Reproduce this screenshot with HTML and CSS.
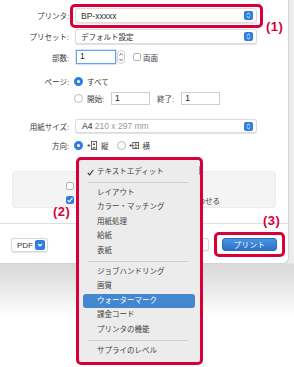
FILE: index.html
```html
<!DOCTYPE html>
<html lang="ja">
<head>
    <meta charset="UTF-8">
    <meta name="viewport" content="width=device-width, initial-scale=1.0">
    <title>プリント</title>
    <link rel="stylesheet" href="styles.css">
</head>
<body>

    <div class="dialog">
        <div class="form">
            <div class="row r1">
                <span class="label">プリンタ:</span>
                <div class="select"><span class="val latin">BP-xxxxx</span>
                    <svg class="stepper" width="9" height="9" viewBox="0 0 9 9"><rect width="9" height="9" rx="2" fill="#2f7de0"/><path d="M2.8 3.7 4.5 2.1 6.2 3.7M2.8 5.3 4.5 6.9 6.2 5.3" fill="none" stroke="#fff" stroke-width="1"/></svg>
                </div>
            </div>
            <div class="row r2">
                <span class="label">プリセット:</span>
                <div class="select"><span class="val">デフォルト設定</span>
                    <svg class="stepper" width="9" height="9" viewBox="0 0 9 9"><rect width="9" height="9" rx="2" fill="#2f7de0"/><path d="M2.8 3.7 4.5 2.1 6.2 3.7M2.8 5.3 4.5 6.9 6.2 5.3" fill="none" stroke="#fff" stroke-width="1"/></svg>
                </div>
            </div>
            <div class="row r3">
                <span class="label">部数:</span>
                <div class="field copies focus">1</div>
                <svg class="spin" width="8" height="14" viewBox="0 0 8 14"><rect x="0.5" y="0.5" width="7" height="13" rx="3.5" fill="#fff" stroke="#cfcfcf"/><path d="M2.3 5.2 4 3.5 5.7 5.2M2.3 8.8 4 10.5 5.7 8.8" fill="none" stroke="#555" stroke-width=".9"/></svg>
                <span class="check"></span>
                <span class="text">両面</span>
            </div>
            <div class="row r4">
                <span class="label">ページ:</span>
                <span class="radio on"></span>
                <span class="text">すべて</span>
            </div>
            <div class="row r5">
                <span class="label"></span>
                <span class="radio"></span>
                <span class="text">開始:</span>
                <div class="field range">1</div>
                <span class="text end">終了:</span>
                <div class="field range">1</div>
            </div>
            <div class="row r6">
                <span class="label">用紙サイズ:</span>
                <div class="select"><span class="val latin"><b>A4</b> <span class="dim">210 x 297 mm</span></span>
                    <svg class="stepper" width="9" height="9" viewBox="0 0 9 9"><rect width="9" height="9" rx="2" fill="#2f7de0"/><path d="M2.8 3.7 4.5 2.1 6.2 3.7M2.8 5.3 4.5 6.9 6.2 5.3" fill="none" stroke="#fff" stroke-width="1"/></svg>
                </div>
            </div>
            <div class="row r7">
                <span class="label">方向:</span>
                <span class="radio on"></span>
                <svg class="orient" width="10" height="9" viewBox="0 0 10 9"><path d="M0.3 4.5h3M1.8 3v3" stroke="#444" stroke-width=".8"/><rect x="4.4" y="0.4" width="5.2" height="8.2" fill="none" stroke="#444" stroke-width=".8"/><circle cx="7" cy="3.2" r="1" fill="#444"/><path d="M5.3 7.4c0-1.6 3.4-1.6 3.4 0z" fill="#444"/></svg>
                <span class="text">縦</span>
                <span class="radio second"></span>
                <svg class="orient" width="10" height="9" viewBox="0 0 10 9"><path d="M0.3 4.5h3M1.8 3v3" stroke="#444" stroke-width=".8"/><rect x="3.9" y="1.4" width="5.7" height="6.2" fill="none" stroke="#444" stroke-width=".8"/><path d="M4.4 4.5h4.8" stroke="#444" stroke-width=".6"/><circle cx="6.8" cy="3.1" r=".8" fill="#444"/><path d="M5.6 6.8c0-1.3 2.4-1.3 2.4 0z" fill="#444"/></svg>
                <span class="text">横</span>
            </div>
        </div>

        <div class="panel">
            <div class="opt"><span class="check"></span></div>
            <div class="opt"><span class="check on"></span><span class="text">内容を折り返してページの横幅に合わせる</span></div>
        </div>

        <div class="footer">
            <div class="btn pdf"><span class="latin">PDF</span>
                <svg width="10" height="10" viewBox="0 0 10 10"><rect width="10" height="10" rx="2" fill="#2f7de0"/><path d="M3 4 5 6 7 4" fill="none" stroke="#fff" stroke-width="1.1"/></svg>
            </div>
            <div class="btn cancel">キャンセル</div>
            <div class="btn print">プリント</div>
        </div>
    </div>

    <div class="menu">
        <div class="item"><svg class="tick" width="7" height="7" viewBox="0 0 7 7"><path d="M0.8 3.8 2.6 5.8 6.2 1" fill="none" stroke="#333" stroke-width="1.1"/></svg>テキストエディット</div>
        <div class="sep"></div>
        <div class="item">レイアウト</div>
        <div class="item">カラー・マッチング</div>
        <div class="item">用紙処理</div>
        <div class="item">給紙</div>
        <div class="item">表紙</div>
        <div class="sep"></div>
        <div class="item">ジョブハンドリング</div>
        <div class="item">画質</div>
        <div class="item active">ウォーターマーク</div>
        <div class="item">課金コード</div>
        <div class="item">プリンタの機能</div>
        <div class="sep"></div>
        <div class="item">サプライのレベル</div>
        <span class="scroll"></span>
    </div>

    <div class="callout box1"></div>
    <div class="callout box3"></div>
    <span class="tag tag1">(1)</span>
    <span class="tag tag2">(2)</span>
    <span class="tag tag3">(3)</span>

</body>
</html>
```

FILE: styles.css
```css
body {
    margin: 0;
    width: 294px;
    height: 367px;
    overflow: hidden;
    position: relative;
    font-family: "Liberation Sans", "Noto Sans CJK JP", sans-serif;
    font-size: 7.5px;
    color: #3c3c3c;
    background: linear-gradient(#ececec 0, #ececec 263px, #d8d8d8 264px, #fff 318px);
}
.latin { font-size: 8.5px; }

/* dialog */
.dialog { width: 289px; height: 264px; box-sizing: border-box; background: #fff; border-right: 1px solid #d4d4d4; border-bottom: 1px solid #d4d4d4; border-bottom-right-radius: 6px; display: flex; flex-direction: column; }
.form { padding-top: 8px; }
.row { display: flex; align-items: center; }
.label { width: 69px; flex: none; margin-right: 6px; text-align: right; white-space: nowrap; color: #3a3a3a; }
.text { white-space: nowrap; }

.r1 { height: 15px; }
.r2 { height: 15px; margin-top: 6px; }
.r3 { height: 14px; margin-top: 6px; }
.r4 { height: 12px; margin-top: 11px; }
.r5 { height: 13px; margin-top: 5px; }
.r6 { height: 14px; margin-top: 14px; }
.r7 { height: 12px; margin-top: 6px; }

.select { width: 182px; height: 100%; box-sizing: border-box; display: flex; align-items: center; justify-content: space-between; padding: 0 3px 0 5px; background: #fff; border: 1px solid #dcdcdc; border-radius: 3px; box-shadow: 0 0.5px 1px rgba(0,0,0,.12); }
.select .val { color: #2e2e2e; }
.r6 .select .val { padding-left: 1px; }
.select b { font-weight: normal; color: #222; }
.select .dim { color: #9a9a9a; }

.field { height: 13px; box-sizing: border-box; border: 1px solid #cfcfcf; background: #fff; padding-left: 3px; line-height: 11px; font-size: 8.5px; color: #222; }
.copies { width: 40px; margin-left: 1px; height: 14px; line-height: 11px; }
.focus { border: 1.5px solid #6aa3e6; box-shadow: 0 0 0 0.5px #a9c9ef; }
.spin { margin-left: 1px; }
.range { width: 39px; margin-left: 7px; }
.end { margin-left: 7px; }

.check { width: 8px; height: 8px; box-sizing: border-box; border: 1px solid #b5b5b5; border-radius: 2px; background: #fff; flex: none; }
.r3 .check { margin-left: 8px; margin-right: 2px; }
.check.on { border: none; background: #2f7de0 url("data:image/svg+xml,%3Csvg xmlns='http://www.w3.org/2000/svg' viewBox='0 0 8 8'%3E%3Cpath d='M1.6 4.2 3.3 5.8 6.5 1.8' fill='none' stroke='white' stroke-width='1.2'/%3E%3C/svg%3E") center/8px 8px no-repeat; }

.radio { width: 9px; height: 9px; box-sizing: border-box; border-radius: 50%; border: 1px solid #b8b8b8; background: #fff; margin-left: -1px; margin-right: 4px; flex: none; }
.radio.on { border: 3px solid #2f7de0; }
.radio.second { margin-left: 8px; margin-right: 3px; }
.orient { margin-right: 4px; flex: none; }

/* options panel */
.panel { margin: 20px 0 0 12px; width: 264px; height: 37px; box-sizing: border-box; padding: 10px 0 0 53px; background: #f4f4f4; border: 1px solid #ebebeb; border-radius: 4px; }
.opt { display: flex; align-items: center; height: 8px; gap: 4px; }
.opt + .opt { margin-top: 6px; }

/* bottom bar */
.footer { margin-top: 15px; border-top: 1px solid #dedede; flex: 1; display: flex; align-items: flex-start; padding: 14px 11px 0 11px; }
.btn { height: 13px; box-sizing: border-box; border-radius: 3px; display: flex; align-items: center; justify-content: center; white-space: nowrap; }
.pdf { width: 37px; height: 14px; justify-content: space-between; padding: 0 2px 0 5px; background: #fff; border: 1px solid #d8d8d8; box-shadow: 0 0.5px 1px rgba(0,0,0,.1); color: #333; }
.pdf .latin { font-size: 8px; }
.cancel { margin-left: auto; width: 50px; background: #fff; border: 1px solid #d8d8d8; box-shadow: 0 0.5px 1px rgba(0,0,0,.1); }
.print { margin-left: 13px; width: 55px; color: #fff; background: linear-gradient(#4a93e2, #2b72c9); border: 1px solid #2a6cc0; letter-spacing: 0.5px; }

/* popup menu */
.menu { position: absolute; left: 76px; top: 157px; width: 127px; height: 208px; box-sizing: border-box; padding-top: 4.75px; background: #ececec; border: 3px solid #d8003a; border-radius: 5px; color: #424242; }
.item { position: relative; height: 14.5px; line-height: 14.5px; margin: 0 5px 0 4px; padding-left: 14px; border-radius: 3px; white-space: nowrap; }
.item.active { background: #4287cf; color: #fff; }
.tick { position: absolute; left: 4px; top: 4px; }
.sep { height: 1px; background: #cfcfcf; margin: 2.75px 12px 2.75px 9px; }
.scroll { position: absolute; right: 0; top: 6px; width: 1.5px; height: 9px; background: #7d9fcc; }

/* red callouts */
.callout { position: absolute; box-sizing: border-box; border: 3px solid #d8003a; border-radius: 5px; }
.box1 { left: 70px; top: 4px; width: 193px; height: 24px; }
.box3 { left: 214px; top: 232px; width: 71px; height: 25px; }
.tag { position: absolute; font-family: "Liberation Sans", sans-serif; font-weight: bold; font-size: 13px; line-height: 1; color: #d8003a; letter-spacing: 0.5px; }
.tag1 { left: 266px; top: 20px; }
.tag2 { left: 53px; top: 205px; }
.tag3 { left: 263px; top: 214px; }
```
